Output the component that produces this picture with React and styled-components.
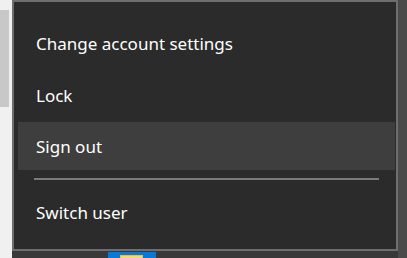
import React from "react";
import styled, { createGlobalStyle } from "styled-components";

const Global = createGlobalStyle`
  html, body { margin: 0; padding: 0; background: #f0f0f0; }
  body { font-family: "Noto Sans", "Open Sans", sans-serif; overflow: hidden; }
`;

const Screen = styled.div`
  width: 407px;
  height: 258px;
  display: grid;
  grid-template-columns: 12px 386px 9px;
  grid-template-rows: 251px 7px;
  background: #f0f0f0;
  overflow: hidden;
`;

const LeftStrip = styled.div`
  grid-row: 1 / 3;
  grid-column: 1;
  background: #f0f0f0;
  padding-top: 10px;
`;

const LeftBlock = styled.div`
  width: 9px;
  height: 97px;
  background: #c8c8c8;
`;

const RightStrip = styled.div`
  grid-row: 1 / 3;
  grid-column: 3;
  background: #4a4a4a;
`;

const Taskbar = styled.div`
  grid-row: 2;
  grid-column: 2;
  background: #393939;
  padding: 1px 0 0 96px;
  display: flex;
`;

const Tile = styled.div`
  width: 48px;
  background: #0a78d7;
  padding: 3px 0 0 12px;
  box-sizing: border-box;
`;

const TileInner = styled.div`
  width: 23px;
  height: 10px;
  background: #f7d86d;
  border: 1px solid #e8c04a;
  box-sizing: border-box;
`;

const Menu = styled.div`
  grid-row: 1;
  grid-column: 2;
  box-sizing: border-box;
  background: #2b2b2b;
  border: 2px solid #6e6e6e;
  padding: 17px 1px 13px 4px;
  display: flex;
  flex-direction: column;
`;

const Item = styled.div`
  height: 48px;
  display: flex;
  align-items: center;
  padding-left: 18px;
  color: #ffffff;
  font-size: 17px;
  background: ${(p) => (p.$active ? "#3e3e3e" : "transparent")};
  margin-bottom: ${(p) => p.$gap || 0}px;
  white-space: nowrap;
`;

const Separator = styled.div`
  height: 2px;
  margin: 8px 16px 8px 16px;
  background: #7a7a7a;
`;

export default function App() {
  return (
    <>
      <Global />
      <Screen>
        <LeftStrip>
          <LeftBlock />
        </LeftStrip>
        <Menu>
          <Item $gap={4}>Change account settings</Item>
          <Item $gap={3}>Lock</Item>
          <Item $active>Sign out</Item>
          <Separator />
          <Item>Switch user</Item>
        </Menu>
        <RightStrip />
        <Taskbar>
          <Tile>
            <TileInner />
          </Tile>
        </Taskbar>
      </Screen>
    </>
  );
}
